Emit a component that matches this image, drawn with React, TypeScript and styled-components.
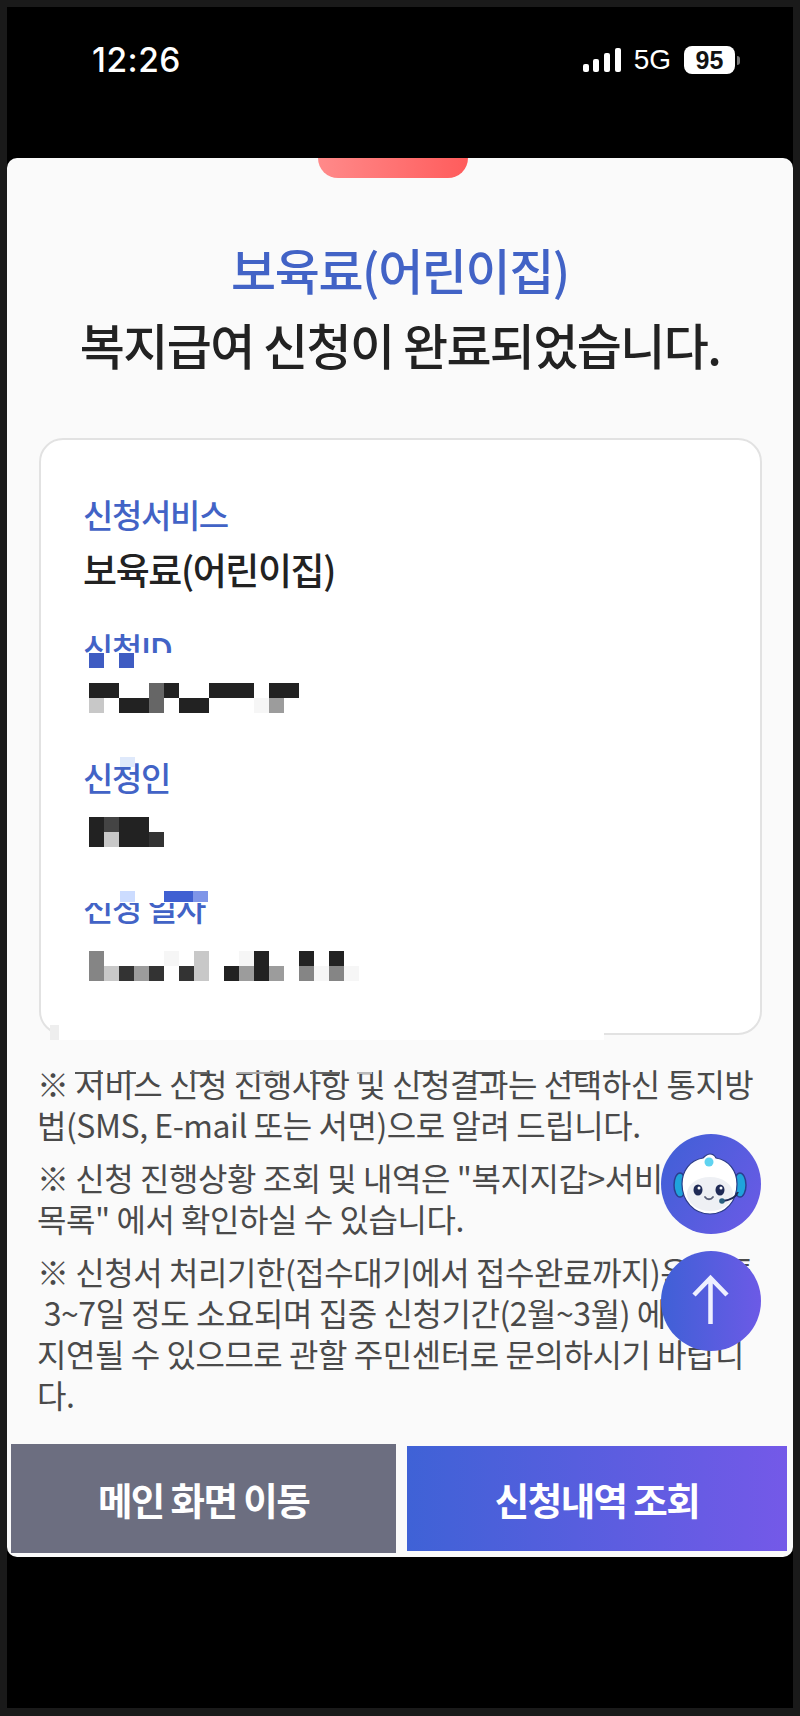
import React, { FC } from 'react';
import styled, { createGlobalStyle } from 'styled-components';

const KR = `"Noto Sans CJK KR", "Noto Sans", sans-serif`;

const GlobalStyle = createGlobalStyle`
    html, body {
        margin: 0;
        padding: 0;
        background: #1a1a1a;
    }
    * {
        box-sizing: border-box;
    }
`;

// mosaic colours, "." is an empty cell
const shades: Record<string, string> = {
    d: '#222222',
    e: '#333333',
    g: '#444444',
    m: '#666666',
    n: '#858585',
    o: '#9c9c9c',
    c: '#c8c8c8',
    f: '#f6f6f6',
    '.': 'transparent',
};

const idRows = ['dd..md..ddd.dd', 'c.ddm.dd...fo.'];
const nameRows = ['dgdd.', 'dcdde'];
const dateRows = ['n....f.c..fd..d.d.', 'nceoe.ec.dodo.nfnf'];

const Mosaic: FC<{ rows: string[] }> = ({ rows }) => (
    <MosaicGrid $cols={rows[0].length}>
        {rows.join('').split('').map((cell, index) => (
            <MosaicCell key={index} $color={shades[cell]} />
        ))}
    </MosaicGrid>
);

const noteBars = [
    { x: 68, w: 28, c: '#555' },
    { x: 111, w: 18, c: '#555' },
    { x: 183, w: 18, c: '#666' },
    { x: 230, w: 46, c: '#aaa' },
    { x: 303, w: 30, c: '#666' },
    { x: 350, w: 15, c: '#bbb' },
    { x: 410, w: 14, c: '#555' },
    { x: 466, w: 32, c: '#555' },
    { x: 556, w: 32, c: '#555' },
];

const App: FC = () => {
    return (
        <Frame>
            <GlobalStyle />
            <Screen>
                <StatusBar>
                    <Clock>12:26</Clock>
                    <StatusIcons>
                        <SignalBars width="40" height="26" viewBox="0 0 40 26">
                            <rect x="1" y="17" width="6" height="8" rx="2" />
                            <rect x="11" y="12" width="6" height="13" rx="2" />
                            <rect x="22" y="6" width="6" height="19" rx="2" />
                            <rect x="33" y="1" width="6" height="24" rx="2" />
                        </SignalBars>
                        <Network>5G</Network>
                        <Battery>
                            <BatteryLevel>95</BatteryLevel>
                            <BatteryTip />
                        </Battery>
                    </StatusIcons>
                </StatusBar>
                <Sheet>
                    <RedTab />
                    <Title>보육료(어린이집)</Title>
                    <Subtitle>복지급여 신청이 완료되었습니다.</Subtitle>
                    <InfoCard>
                        <Field $mt={0}>
                            <Label $gap={15}>신청서비스</Label>
                            <Value>보육료(어린이집)</Value>
                        </Field>
                        <Field $mt={39}>
                            <Label $gap={15}>신청ID</Label>
                            <Patch $left={0} $top={25} $w={130} $h={20} $c="#ffffff" />
                            <Patch $left={6} $top={25} $w={15} $h={15} $c="#3f5cc2" />
                            <Patch $left={36} $top={25} $w={15} $h={15} $c="#3f5cc2" />
                            <Mosaic rows={idRows} />
                        </Field>
                        <Field $mt={44}>
                            <Patch $left={37} $top={0} $w={15} $h={10} $c="#dfe9fb" />
                            <Label $gap={20}>신청인</Label>
                            <Mosaic rows={nameRows} />
                        </Field>
                        <Field $mt={40}>
                            <Label $gap={24}>신청 일자</Label>
                            <Patch $left={0} $top={4} $w={128} $h={12} $c="#ffffff" />
                            <Patch $left={37} $top={4} $w={15} $h={11} $c="#ccdcff" />
                            <Patch $left={81} $top={4} $w={29} $h={11} $c="#4060d2" />
                            <Patch $left={110} $top={4} $w={15} $h={11} $c="#7f95e8" />
                            <Mosaic rows={dateRows} />
                        </Field>
                        <CardGlitch />
                    </InfoCard>
                    <Notes>
                        <Note>
                            {noteBars.map((bar) => (
                                <NoteBar key={bar.x} $x={bar.x} $w={bar.w} $c={bar.c} />
                            ))}
                            <NoteLine>※ 서비스 신청 진행사항 및 신청결과는 선택하신 통지방</NoteLine>
                            <NoteLine>법(SMS, E-mail 또는 서면)으로 알려 드립니다.</NoteLine>
                        </Note>
                        <Note>
                            <NoteLine>※ 신청 진행상황 조회 및 내역은 "복지지갑&gt;서비스 신청</NoteLine>
                            <NoteLine>목록" 에서 확인하실 수 있습니다.</NoteLine>
                        </Note>
                        <Note>
                            <NoteLine>※ 신청서 처리기한(접수대기에서 접수완료까지)은 보통</NoteLine>
                            <NoteLine>&nbsp;3~7일 정도 소요되며 집중 신청기간(2월~3월) 에는</NoteLine>
                            <NoteLine>지연될 수 있으므로 관할 주민센터로 문의하시기 바랍니</NoteLine>
                            <NoteLine>다.</NoteLine>
                        </Note>
                    </Notes>
                    <FloatStack>
                        <RoundButton>
                            <svg width="100" height="100" viewBox="0 0 100 100">
                                <ellipse cx="19" cy="51" rx="6" ry="12" fill="#1fa3dc" stroke="#2b3f8f" strokeWidth="1.5" />
                                <ellipse cx="79" cy="51" rx="6" ry="12" fill="#1fa3dc" stroke="#2b3f8f" strokeWidth="1.5" />
                                <path d="M49 20c3 0 5 2 6 4 13 2 21 13 21 26 0 17-11 30-27 30S21 67 21 50c0-13 8-24 21-26 2-2 4-4 7-4z" fill="#ffffff" stroke="#2a3a86" strokeWidth="1.2" />
                                <ellipse cx="49" cy="60" rx="23" ry="17" fill="#eef0f4" />
                                <circle cx="48" cy="28" r="4.500" fill="#5fd3f0" />
                                <ellipse cx="37" cy="56" rx="4.500" ry="5.500" fill="#1f2a55" />
                                <ellipse cx="59" cy="56" rx="4.500" ry="5.500" fill="#1f2a55" />
                                <circle cx="38" cy="54" r="1.500" fill="#ffffff" />
                                <circle cx="60" cy="54" r="1.500" fill="#ffffff" />
                                <path d="M44 63c2 3 6 3 8 0" fill="none" stroke="#5a6078" strokeWidth="1.800" strokeLinecap="round" />
                                <path d="M77 58c-2 5-8 8-15 9" fill="none" stroke="#1f2a55" strokeWidth="2" />
                                <circle cx="61" cy="67" r="2.800" fill="#2a5f7f" />
                            </svg>
                        </RoundButton>
                        <RoundButton $flat>
                            <svg width="100" height="100" viewBox="0 0 100 100">
                                <path d="M49.500 73V27M33 44l16.500-17L66 44" fill="none" stroke="#eef0ff" strokeWidth="4.500" />
                            </svg>
                        </RoundButton>
                    </FloatStack>
                    <Actions>
                        <GrayButton>메인 화면 이동</GrayButton>
                        <BlueButton>신청내역 조회</BlueButton>
                    </Actions>
                </Sheet>
            </Screen>
        </Frame>
    );
};

const Frame = styled.div`
    width: 800px;
    height: 1716px;
    padding: 7px 7px 8px;
    background: #1a1a1a;
    overflow: hidden;
`;

const Screen = styled.div`
    height: 1701px;
    background: #000000;
    display: flex;
    flex-direction: column;
`;

const StatusBar = styled.div`
    height: 151px;
    flex: none;
    display: flex;
    justify-content: space-between;
    align-items: flex-start;
    padding: 34px 53px 0 85px;
    color: #ffffff;
`;

const Clock = styled.div`
    font: 500 33.500px/38px "Inter", "Liberation Sans", sans-serif;
    letter-spacing: 0.5px;
`;

const StatusIcons = styled.div`
    display: flex;
    align-items: center;
    margin-top: 5px;
`;

const SignalBars = styled.svg`
    fill: #ffffff;
    margin-right: 12px;
`;

const Network = styled.div`
    font: 400 28px/28px "Liberation Sans", sans-serif;
    margin-right: 13px;
`;

const Battery = styled.div`
    display: flex;
    align-items: center;
`;

const BatteryLevel = styled.div`
    width: 51px;
    height: 28px;
    border-radius: 8px;
    background: #ffffff;
    color: #111111;
    font: 700 25px/28px "Liberation Sans", sans-serif;
    text-align: center;
`;

const BatteryTip = styled.div`
    width: 3px;
    height: 9px;
    margin-left: 2px;
    border-radius: 0 3px 3px 0;
    background: #777777;
`;

const Sheet = styled.div`
    position: relative;
    height: 1399px;
    flex: none;
    background: #fafafa;
    border-radius: 10px;
    display: flex;
    flex-direction: column;
    overflow: hidden;
`;

const RedTab = styled.div`
    width: 150px;
    height: 20px;
    flex: none;
    margin-left: 311px;
    border-radius: 0 0 28px 28px;
    background: linear-gradient(90deg, #ff8a8a, #ff5c5c);
`;

const Title = styled.h1`
    margin: 61px 0 0;
    font: 500 49px/60px ${KR};
    letter-spacing: -1.4px;
    color: #4263c6;
    text-align: center;
`;

const Subtitle = styled.h2`
    margin: 15px 0 0;
    font: 500 49px/60px ${KR};
    letter-spacing: -1.6px;
    color: #222222;
    text-align: center;
`;

const InfoCard = styled.div`
    position: relative;
    width: 723px;
    height: 597px;
    flex: none;
    margin: 64px 0 0 32px;
    padding: 54px 0 0 42px;
    background: #ffffff;
    border: 2px solid #e2e2e2;
    border-radius: 24px;
    display: flex;
    flex-direction: column;
`;

const Field = styled.div<{ $mt: number }>`
    position: relative;
    margin-top: ${(props) => props.$mt}px;
`;

const Label = styled.div<{ $gap: number }>`
    font: 500 33px/40px ${KR};
    letter-spacing: -1.4px;
    color: #4263c6;
    margin-bottom: ${(props) => props.$gap}px;
`;

const Value = styled.div`
    font: 500 37px/40px ${KR};
    letter-spacing: -1.4px;
    color: #222222;
`;

const Patch = styled.div<{ $left: number; $top: number; $w: number; $h: number; $c: string }>`
    position: absolute;
    left: ${(props) => props.$left}px;
    top: ${(props) => props.$top}px;
    width: ${(props) => props.$w}px;
    height: ${(props) => props.$h}px;
    background: ${(props) => props.$c};
`;

const MosaicGrid = styled.div<{ $cols: number }>`
    display: grid;
    grid-template-columns: repeat(${(props) => props.$cols}, 15px);
    grid-auto-rows: 15px;
    margin-left: 6px;
`;

const MosaicCell = styled.div<{ $color: string }>`
    background: ${(props) => props.$color};
`;

const CardGlitch = styled.div`
    position: absolute;
    left: 18px;
    bottom: -7px;
    width: 545px;
    height: 15px;
    background: #ffffff;

    &::before {
        content: '';
        position: absolute;
        left: -9px;
        top: 0;
        width: 9px;
        height: 15px;
        background: #eeeeee;
    }
`;

const Notes = styled.div`
    margin: 28px 0 0 30px;
    display: flex;
    flex-direction: column;
    gap: 12px;
`;

const Note = styled.div`
    position: relative;
`;

const NoteLine = styled.div`
    font: 400 32px/41px ${KR};
    letter-spacing: -0.45px;
    color: #4a4a4a;
    white-space: nowrap;
`;

const NoteBar = styled.div<{ $x: number; $w: number; $c: string }>`
    position: absolute;
    top: 9px;
    left: ${(props) => props.$x - 30}px;
    width: ${(props) => props.$w}px;
    height: 2px;
    background: ${(props) => props.$c};
`;

const FloatStack = styled.div`
    position: absolute;
    top: 976px;
    left: 654px;
    display: flex;
    flex-direction: column;
    gap: 17px;
`;

const RoundButton = styled.div<{ $flat?: boolean }>`
    width: 100px;
    height: 100px;
    border-radius: 50%;
    background: linear-gradient(${(props) => (props.$flat ? '90deg' : '120deg')}, #3f60d6, #6c5ae6);
    display: flex;
`;

const Actions = styled.div`
    position: absolute;
    left: 0;
    right: 0;
    bottom: 4px;
    height: 109px;
    display: flex;
    align-items: center;
    padding: 0 6px 0 4px;
    gap: 11px;
`;

const GrayButton = styled.div`
    width: 385px;
    height: 109px;
    flex: none;
    background: #6c6e80;
    color: #ffffff;
    font: 700 37.500px/109px ${KR};
    letter-spacing: -1.6px;
    text-align: center;
`;

const BlueButton = styled.div`
    flex: 1;
    height: 105px;
    background: linear-gradient(90deg, #3f62d6, #7459e8);
    color: #ffffff;
    font: 700 37.500px/105px ${KR};
    letter-spacing: -1.6px;
    text-align: center;
`;

export default App;
